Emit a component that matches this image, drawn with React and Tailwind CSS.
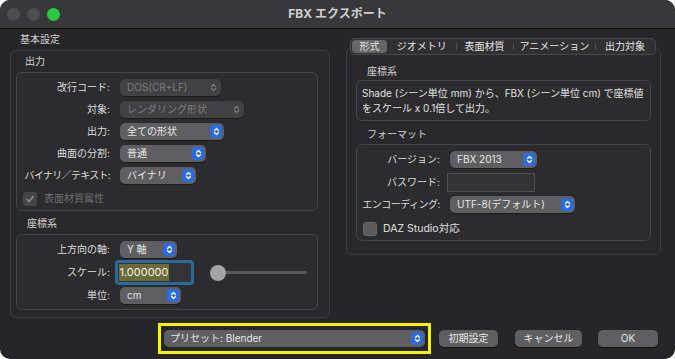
import React from 'react';

const FONT = "font-['Inter','Noto_Sans_CJK_JP',sans-serif]";

const Stepper = ({ blue = true }) => (
  <div
    className={
      'flex items-center justify-center w-[12px] h-[13px] rounded-[3px] mr-[2px] ' +
      (blue ? 'bg-[#2c6be0]' : 'bg-transparent')
    }
  >
    <svg width="7" height="9" viewBox="0 0 7 9" fill="none">
      <path
        d="M1.5 3.5 L3.5 1.5 L5.5 3.5 M1.5 5.5 L3.5 7.5 L5.5 5.5"
        stroke={blue ? '#ffffff' : '#7a7a7c'}
        strokeWidth="1.2"
        strokeLinecap="round"
        strokeLinejoin="round"
      />
    </svg>
  </div>
);

const Popup = ({ value, width, disabled = false }) => (
  <div
    className={
      'flex items-center justify-between h-[17px] rounded-[5px] pl-[7px] text-[10px] shadow-[0_0.5px_1px_rgba(0,0,0,0.4)] ' +
      (disabled ? 'bg-[#414143] text-[#7c7c7e]' : 'bg-[#5f5f61] text-[#e6e6e6]')
    }
    style={{ width }}
  >
    <span className="truncate">{value}</span>
    <Stepper blue={!disabled} />
  </div>
);

const Row = ({ label, labelW, tight = '', children }) => (
  <div className="flex items-center">
    <div className={'text-right text-[10px] text-[#dcdcdc] shrink-0 whitespace-nowrap ' + tight} style={{ width: labelW }}>
      {label}
    </div>
    {children}
  </div>
);

const Check = ({ disabled = false }) => (
  <div
    className={
      'flex items-center justify-center w-[14px] h-[14px] rounded-[3px] ' +
      (disabled ? 'bg-[#454547]' : 'bg-[#5b5b5d] border border-[#6a6a6c]')
    }
  >
    {disabled && (
      <svg width="10" height="10" viewBox="0 0 10 10" fill="none">
        <path d="M2 5.3 L4.1 7.6 L8 2.4" stroke="#8a8a8c" strokeWidth="1.6" strokeLinecap="round" strokeLinejoin="round" />
      </svg>
    )}
  </div>
);

const Button = ({ children, width }) => (
  <div
    className="flex items-center justify-center h-[17px] rounded-[5px] bg-[#5f5f61] text-[10px] text-[#e6e6e6] shadow-[0_0.5px_1px_rgba(0,0,0,0.4)]"
    style={{ width }}
  >
    {children}
  </div>
);

const tabs = [
  { name: '形式', w: 38, active: true },
  { name: 'ジオメトリ', w: 68 },
  { name: '表面材質', w: 58 },
  { name: 'アニメーション', w: 82 },
  { name: '出力対象', w: 60 },
];

export default function App() {
  return (
    <div className={'w-[675px] h-[359px] bg-white ' + FONT}>
      <div className="w-full h-full rounded-[10px] overflow-hidden bg-[#262628] flex flex-col">
        {/* title bar */}
        <div className="h-[29px] shrink-0 bg-[#38383a] border-b border-[#121212] flex items-center">
          <div className="w-[70px] flex gap-[7px] pl-[7px]">
            <div className="w-[13px] h-[13px] rounded-full bg-[#4d4d4f]" />
            <div className="w-[13px] h-[13px] rounded-full bg-[#4d4d4f]" />
            <div className="w-[13px] h-[13px] rounded-full bg-[#2ac840]" />
          </div>
          <div className="flex-1 text-center text-[12px] font-bold text-[#cfcfcf]">FBX エクスポート</div>
          <div className="w-[70px]" />
        </div>

        {/* content */}
        <div className="flex h-[289px] shrink-0">
          {/* left column */}
          <div className="ml-[10px] w-[320px]">
            <div className="h-[21px] leading-[21px] pl-[10px] text-[10px] text-[#d4d4d4]">基本設定</div>
            <div className="h-[268px] rounded-[6px] border border-[#3d3d3f] bg-[#29292b]">
              <div className="h-[21px] leading-[21px] pl-[14px] text-[10px] text-[#d4d4d4]">出力</div>
              <div className="ml-[5px] w-[302px] h-[139px] rounded-[6px] border border-[#454547] bg-[#2c2c2e] pt-[6px] flex flex-col gap-[5px]">
                <Row label="改行コード:" labelW={93}>
                  <div className="ml-[10px]"><Popup value="DOS(CR+LF)" width={101} disabled /></div>
                </Row>
                <Row label="対象:" labelW={93}>
                  <div className="ml-[10px]"><Popup value="レンダリング形状" width={124} disabled /></div>
                </Row>
                <Row label="出力:" labelW={93}>
                  <div className="ml-[10px]"><Popup value="全ての形状" width={104} /></div>
                </Row>
                <Row label="曲面の分割:" labelW={93}>
                  <div className="ml-[10px]"><Popup value="普通" width={86} /></div>
                </Row>
                <Row label="バイナリ／テキスト:" labelW={93} tight="tracking-[-0.7px]">
                  <div className="ml-[10px]"><Popup value="バイナリ" width={76} /></div>
                </Row>
                <div className="flex items-center mt-[2px] pl-[6px] gap-[7px]">
                  <Check disabled />
                  <span className="text-[10px] text-[#6f6f71]">表面材質属性</span>
                </div>
              </div>

              <div className="h-[23px] leading-[25px] pl-[16px] text-[10px] text-[#d4d4d4]">座標系</div>
              <div className="ml-[5px] w-[302px] h-[76px] rounded-[6px] border border-[#454547] bg-[#2c2c2e] pt-[6px] flex flex-col gap-[2px]">
                <Row label="上方向の軸:" labelW={93}>
                  <div className="ml-[10px]"><Popup value="Y 軸" width={57} /></div>
                </Row>
                <Row label="スケール:" labelW={93}>
                  <div className="ml-[5px] w-[79px] h-[25px] rounded-[4px] border-[3px] border-[#2a6a9b] bg-[#343436] flex items-center pl-[1px]">
                    <span className="bg-[#6c6b37] text-[#f2f2f2] text-[11px] leading-[17px] px-[0.5px]">1.000000</span>
                  </div>
                  <div className="relative ml-[16px] w-[97px] h-[16px] flex items-center">
                    <div className="absolute left-[8px] right-0 h-[3px] rounded-full bg-[#58585a]" />
                    <div className="relative w-[16px] h-[16px] rounded-full bg-[#a4a4a6]" />
                  </div>
                </Row>
                <Row label="単位:" labelW={93}>
                  <div className="ml-[10px]"><Popup value="cm" width={61} /></div>
                </Row>
              </div>
            </div>
          </div>

          {/* right column */}
          <div className="ml-[16px] w-[315px] pt-[9px]">
            <div className="relative z-10 ml-[4px] w-[306px] h-[17px] rounded-[5px] border border-[#48484a] bg-[#303032] flex items-center">
              {tabs.map((t, i) => (
                <div key={t.name} className="relative h-full flex items-center justify-center" style={{ width: t.w - (i === 0 ? 1 : 0) }}>
                  {t.active && <div className="absolute inset-[1px] rounded-[4px] bg-[#666668]" />}
                  {i > 1 && <div className="absolute left-0 top-[4px] bottom-[4px] w-px bg-[#4e4e50]" />}
                  <span className="relative text-[10px] text-[#e4e4e4]">{t.name}</span>
                </div>
              ))}
            </div>
            <div className="-mt-[8px] h-[208px] rounded-[6px] border border-[#3d3d3f] bg-[#29292b] pt-[14px]">
              <div className="h-[18px] leading-[18px] pl-[20px] text-[10px] text-[#d4d4d4]">座標系</div>
              <div className="ml-[9px] w-[295px] h-[41px] rounded-[5px] border border-[#454547] bg-[#2c2c2e] pt-[5px] pl-[5px] text-[10px] leading-[15px] text-[#e0e0e0]">
                <div>Shade (シーン単位 mm) から、FBX (シーン単位 cm) で座標値</div>
                <div>をスケール x 0.1倍して出力。</div>
              </div>
              <div className="h-[23px] pt-[3px] leading-[20px] pl-[20px] text-[10px] text-[#d4d4d4]">フォーマット</div>
              <div className="ml-[9px] w-[295px] h-[97px] rounded-[6px] border border-[#454547] bg-[#2c2c2e] pt-[6px] flex flex-col">
                <Row label="バージョン:" labelW={83}>
                  <div className="ml-[10px]"><Popup value="FBX 2013" width={87} /></div>
                </Row>
                <div className="mt-[5px]">
                  <Row label="パスワード:" labelW={83}>
                    <div className="ml-[7px] w-[88px] h-[19px] border border-[#4e4e50] bg-[#333335]" />
                  </Row>
                </div>
                <div className="mt-[4px]">
                  <Row label="エンコーディング:" labelW={83} tight="tracking-[-0.5px]">
                    <div className="ml-[10px]"><Popup value="UTF-8(デフォルト)" width={125} /></div>
                  </Row>
                </div>
                <div className="mt-[8px] flex items-center pl-[6px] gap-[6px]">
                  <Check />
                  <span className="text-[10.5px] text-[#e0e0e0]">DAZ Studio対応</span>
                </div>
              </div>
            </div>
          </div>
        </div>

        {/* bottom bar */}
        <div className="flex items-center mt-[5px] h-[31px]">
          <div className="ml-[158px] w-[273px] h-[31px] border-[3px] border-[#f5f500] flex items-center pl-[3px]">
            <div className="flex items-center justify-between w-[261px] h-[17px] rounded-[5px] bg-[#5f5f61] pl-[6px] text-[10px] text-[#e6e6e6]">
              <span>プリセット: Blender</span>
              <Stepper />
            </div>
          </div>
          <div className="ml-[8px]"><Button width={59}>初期設定</Button></div>
          <div className="ml-[17px]"><Button width={67}>キャンセル</Button></div>
          <div className="ml-[16px]"><Button width={60}>OK</Button></div>
        </div>
      </div>
    </div>
  );
}
